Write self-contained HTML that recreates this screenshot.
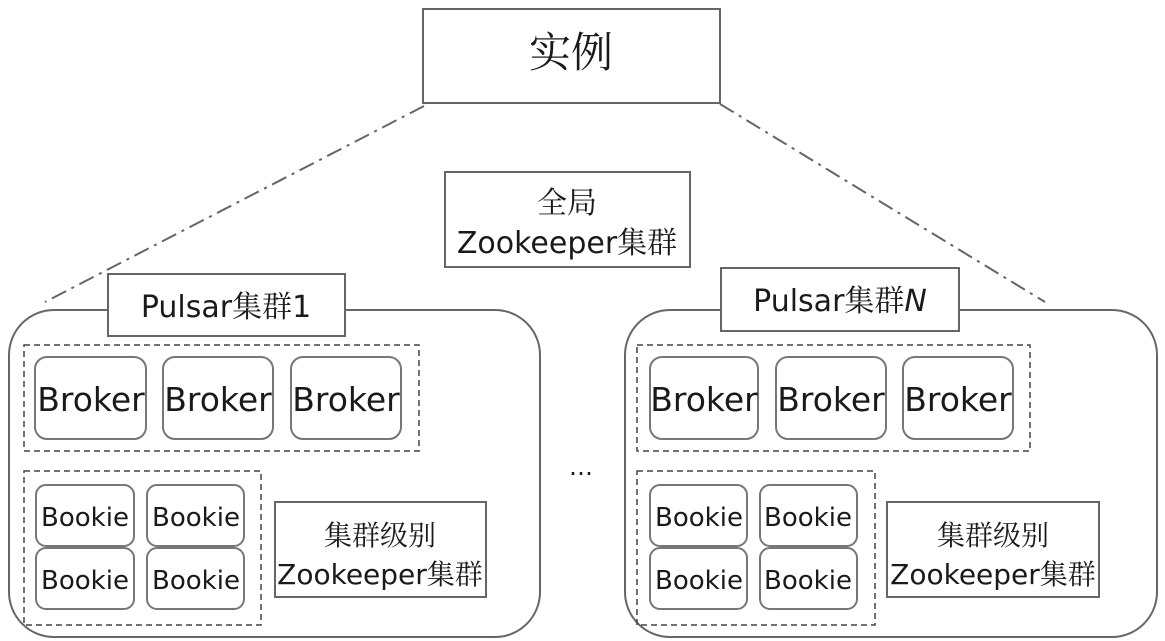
<!DOCTYPE html>
<html><head><meta charset="utf-8"><style>
html,body{margin:0;padding:0;background:#fff;width:1165px;height:641px;overflow:hidden}
text{font-family:"DejaVu Sans","Liberation Sans","Noto Serif CJK SC",sans-serif;fill:#1a1a1a}
.cj{font-family:"Noto Serif CJK SC","Noto Sans CJK SC",serif}
</style></head><body>
<svg width="1165" height="641" viewBox="0 0 1165 641" xmlns="http://www.w3.org/2000/svg">
<g fill="none" stroke="#666" stroke-width="2">
<path d="M424 106 L45 302" stroke-dasharray="16 6 3 6"/>
<path d="M720 104 L1045 302" stroke-dasharray="16 6 3 6"/>
<rect x="9" y="310" width="531" height="327" rx="45"/>
<rect x="625" y="310" width="532" height="327" rx="45"/>
</g>
<g fill="#fff" stroke="#666" stroke-width="2">
<rect x="423" y="9" width="297" height="94"/>
<rect x="445" y="172" width="245" height="95"/>
<rect x="108" y="274" width="237" height="62"/>
<rect x="721" y="268" width="238" height="63"/>
<rect x="275" y="502" width="211" height="95"/>
<rect x="887" y="502" width="212" height="95"/>
</g>
<g fill="none" stroke="#444" stroke-width="1.5" stroke-dasharray="6 4">
<rect x="24" y="345" width="395" height="106"/>
<rect x="24" y="471" width="237" height="154"/>
<rect x="637" y="345" width="393" height="106"/>
<rect x="637" y="471" width="238" height="154"/>
</g>
<g fill="#fff" stroke="#777" stroke-width="2">
<rect x="35" y="357" width="111" height="82" rx="12"/>
<rect x="163" y="357" width="110" height="82" rx="12"/>
<rect x="291" y="357" width="110" height="82" rx="12"/>
<rect x="650" y="357" width="108" height="82" rx="12"/>
<rect x="776" y="357" width="110" height="82" rx="12"/>
<rect x="903" y="357" width="110" height="82" rx="12"/>
<rect x="36" y="485" width="98" height="61" rx="10"/>
<rect x="147" y="485" width="97" height="61" rx="10"/>
<rect x="36" y="548" width="98" height="61" rx="10"/>
<rect x="147" y="548" width="97" height="61" rx="10"/>
<rect x="650" y="485" width="97" height="61" rx="10"/>
<rect x="760" y="485" width="97" height="61" rx="10"/>
<rect x="650" y="548" width="97" height="61" rx="10"/>
<rect x="760" y="548" width="97" height="61" rx="10"/>
</g>
<g text-anchor="middle">
<text x="571" y="67" font-size="42" class="cj">实例</text>
<text x="567" y="213" font-size="30" class="cj">全局</text>
<text x="567" y="253" font-size="30">Zookeeper<tspan class="cj">集群</tspan></text>
<text x="226" y="317" font-size="30">Pulsar<tspan class="cj">集群</tspan>1</text>
<text x="840" y="311" font-size="30">Pulsar<tspan class="cj">集群</tspan><tspan font-style="italic">N</tspan></text>
<g font-size="33">
<text x="91" y="411">Broker</text>
<text x="218" y="411">Broker</text>
<text x="346" y="411">Broker</text>
<text x="704" y="411">Broker</text>
<text x="831" y="411">Broker</text>
<text x="958" y="411">Broker</text>
</g>
<g font-size="26">
<text x="85" y="526">Bookie</text><text x="196" y="526">Bookie</text>
<text x="85" y="589">Bookie</text><text x="196" y="589">Bookie</text>
<text x="699" y="526">Bookie</text><text x="808" y="526">Bookie</text>
<text x="699" y="589">Bookie</text><text x="808" y="589">Bookie</text>
</g>
<text x="380" y="545" font-size="28" class="cj">集群级别</text>
<text x="380" y="584" font-size="28">Zookeeper<tspan class="cj">集群</tspan></text>
<text x="993" y="545" font-size="28" class="cj">集群级别</text>
<text x="993" y="584" font-size="28">Zookeeper<tspan class="cj">集群</tspan></text>
<text x="581" y="475" font-size="24">…</text>
</g>
</svg>
</body></html>
